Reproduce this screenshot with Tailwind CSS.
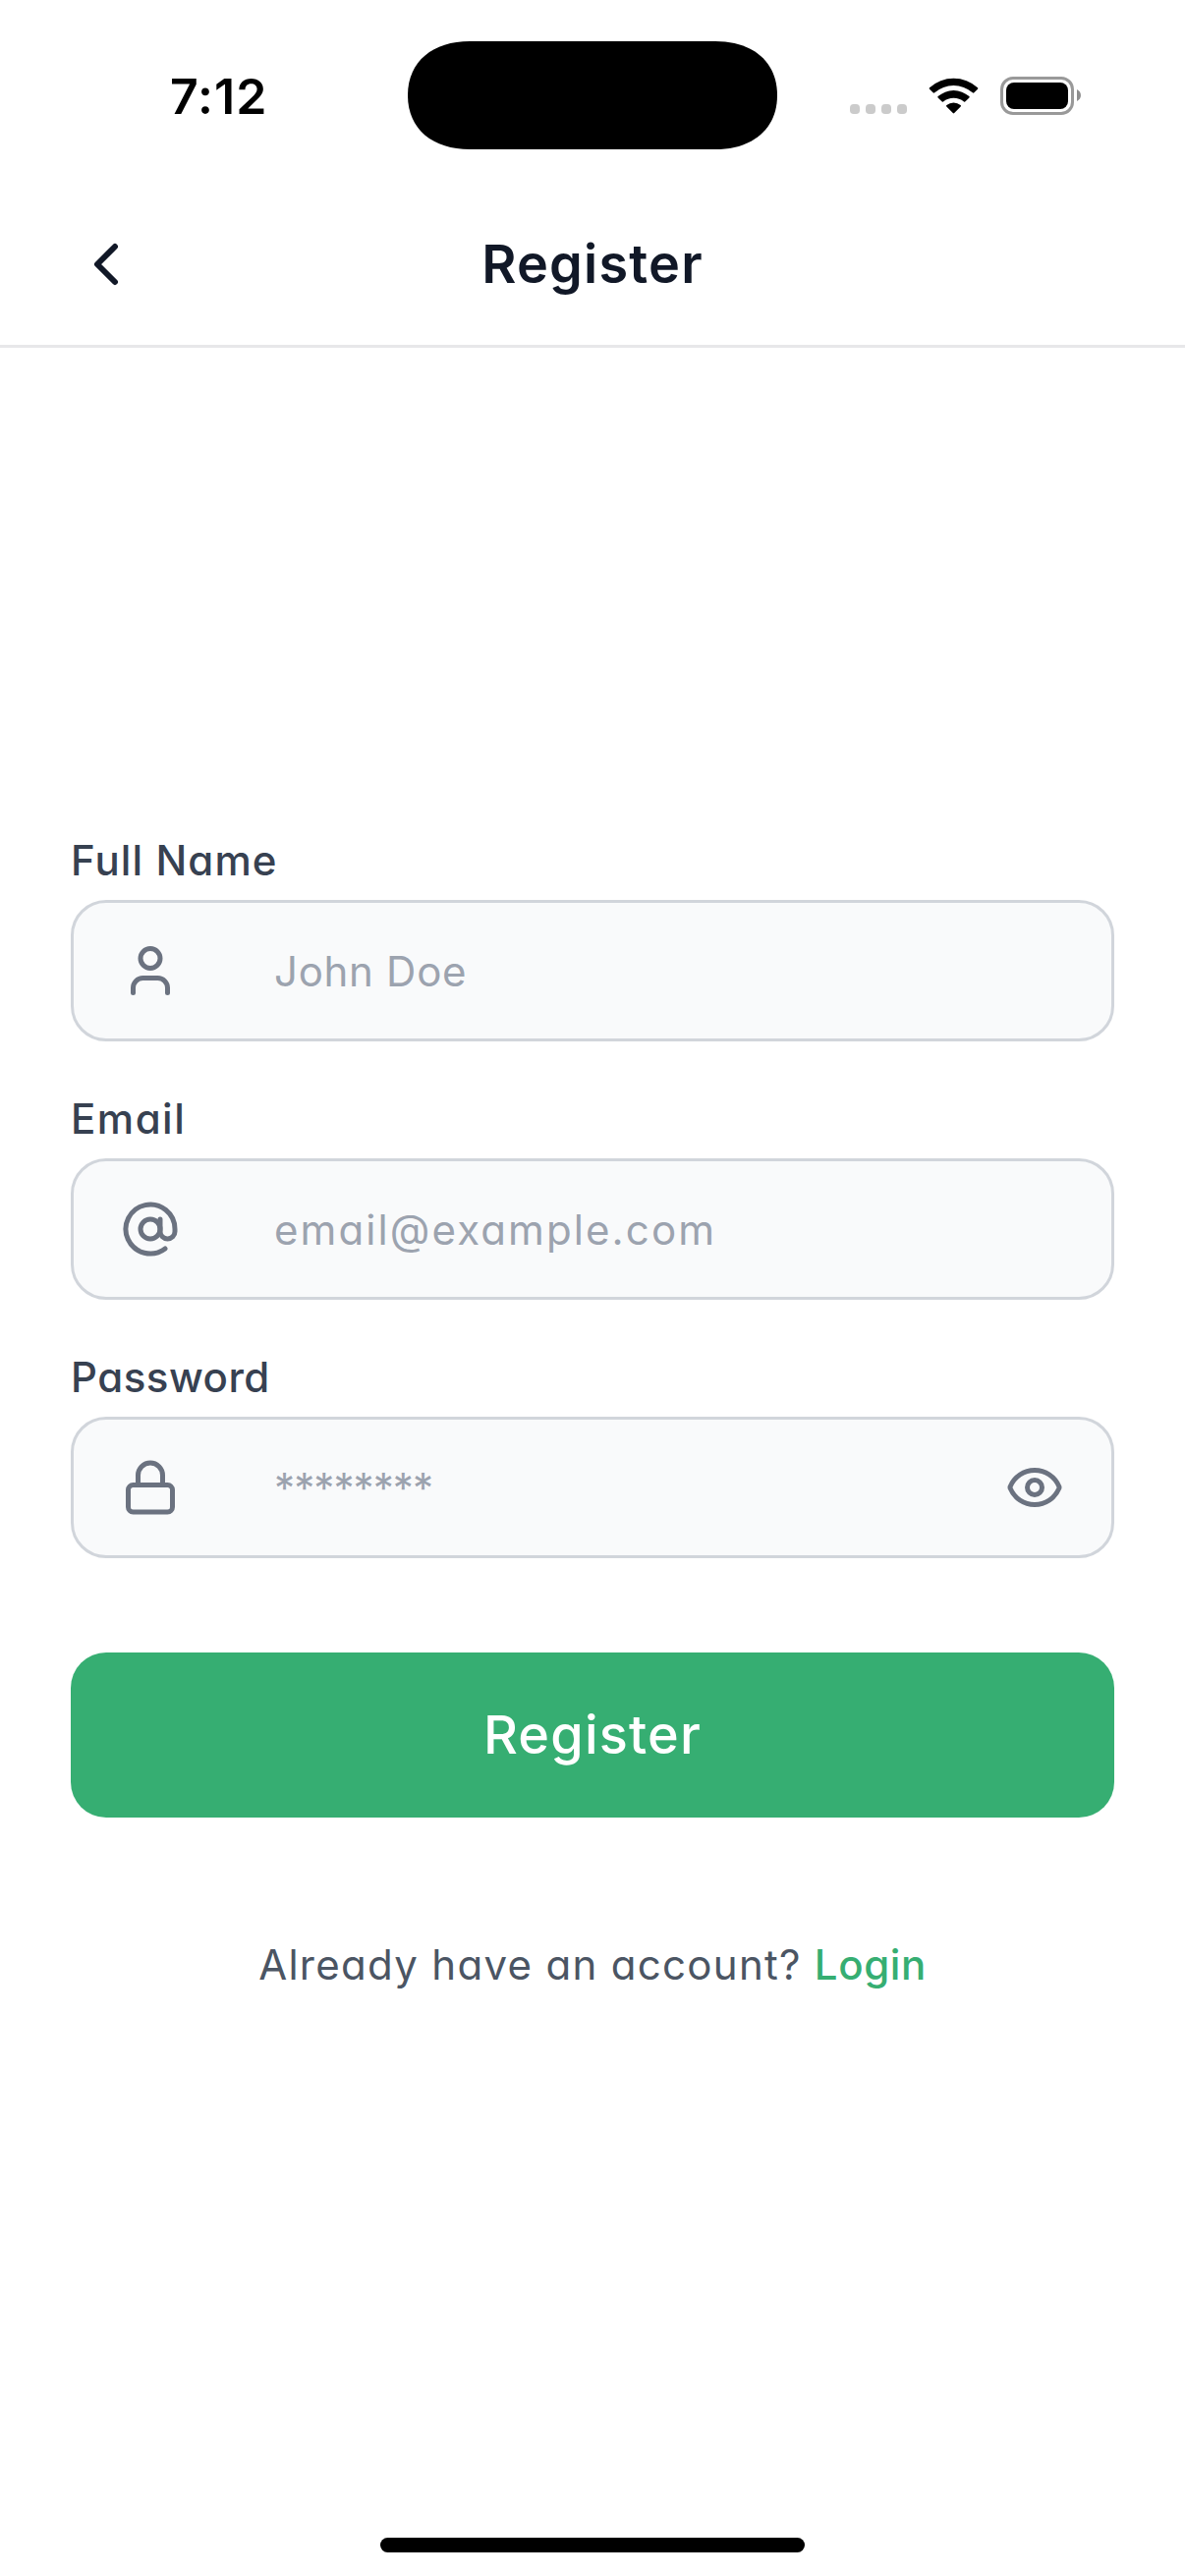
<!DOCTYPE html>
<html lang="en">
<head>
<meta charset="utf-8">
<title>Register</title>
<script src="https://cdn.jsdelivr.net/npm/@tailwindcss/browser@4"></script>
</head>
<body class="bg-white">
<div class="flex h-[2622px] w-[1206px] flex-col overflow-hidden bg-white font-['Inter','Open_Sans',sans-serif] [font-feature-settings:'cv11']">
  <!-- Status bar -->
  <div class="flex h-[186px] shrink-0 items-start pt-[42px]">
    <div class="flex h-[110px] w-[415px] items-center pl-[173px] pt-[2px]">
      <span class="text-[50px] font-semibold leading-none tracking-[1px] text-black">7:12</span>
    </div>
    <svg class="h-[110px] w-[376px]" viewBox="0 0 376 110"><path d="M63 0H313C350 0 376 20 376 55S350 110 313 110H63C26 110 0 90 0 55S26 0 63 0Z"/></svg>
    <svg class="h-[110px] w-[415px]" viewBox="791 42 415 110">
      <g fill="#cbcbcb">
        <rect x="865" y="106" width="10" height="10" rx="3.8"/><rect x="881" y="106" width="10" height="10" rx="3.8"/><rect x="897" y="106" width="10" height="10" rx="3.8"/><rect x="913" y="106" width="10" height="10" rx="3.8"/>
      </g>
      <path d="M946 89.300Q945.200 90 946 90.800L949.600 94.300Q950.400 95 951.200 94.300A29.500 29.500 0 0 1 989.800 94.300Q990.600 95 991.400 94.300L995 90.800Q995.800 90 995 89.300A36.500 36.500 0 0 0 946 89.300Z"/>
      <path d="M954.600 98.100Q953.900 98.800 954.600 99.500L958.500 103.300Q959.200 104 960 103.400A16.800 16.800 0 0 1 981 103.400Q981.800 104 982.500 103.300L986.400 99.500Q987.100 98.800 986.400 98.100A24 24 0 0 0 954.600 98.100Z"/>
      <path d="M963.400 107Q962.600 107.700 963.300 108.400L969.800 115.100Q970.500 115.800 971.200 115.100L977.700 108.400Q978.400 107.700 977.600 107A11.200 11.200 0 0 0 963.400 107Z"/>
      <rect x="1019.500" y="79.500" width="72" height="36" rx="11.500" fill="none" stroke="#999" stroke-width="3"/>
      <rect x="1024" y="84" width="63" height="27" rx="8"/>
      <path d="M1096 91C1101.300 93.500 1101.300 100.500 1096 103Z" fill="#8e8e8e"/>
    </svg>
  </div>

  <!-- Header -->
  <header class="grid h-[168px] shrink-0 grid-cols-3 items-center border-b-[3px] border-[#e7e7e9] px-[72px]">
    <svg class="h-[72px] w-[72px]" viewBox="0 0 72 72" fill="none" stroke="#111827" stroke-width="6" stroke-linecap="round" stroke-linejoin="round"><path d="M45 18L27 36L45 54"/></svg>
    <h1 class="text-center text-[54px] font-semibold leading-none tracking-[1.2px] text-[#111827]">Register</h1>
  </header>

  <!-- Form -->
  <main class="flex flex-col px-[72px] pt-[490px]">
    <form class="flex flex-col gap-[47px]">
      <div class="flex flex-col gap-[9px]">
        <label class="text-[42px] font-medium leading-[63px] tracking-[1.1px] text-[#374151]">Full Name</label>
        <div class="flex h-36 items-center rounded-[36px] border-3 border-[#d1d5db] bg-[#f9fafb] pl-12">
          <svg class="size-[60px]" viewBox="0 0 24 24" fill="none" stroke="#6b7280" stroke-width="2" stroke-linecap="round" stroke-linejoin="round"><circle cx="12" cy="7" r="4"/><path d="M5 21v-2a4 4 0 0 1 4-4h6a4 4 0 0 1 4 4v2"/></svg>
          <span class="ml-24 text-[42px] tracking-[0.7px] text-[#9ca3af]">John Doe</span>
        </div>
      </div>
      <div class="flex flex-col gap-[9px]">
        <label class="text-[42px] font-medium leading-[63px] tracking-[1.5px] text-[#374151]">Email</label>
        <div class="flex h-36 items-center rounded-[36px] border-3 border-[#d1d5db] bg-[#f9fafb] pl-12">
          <svg class="size-[60px]" viewBox="0 0 24 24" fill="none" stroke="#6b7280" stroke-width="2" stroke-linecap="round" stroke-linejoin="round"><circle cx="12" cy="12" r="4"/><path d="M16 8v5a3 3 0 0 0 6 0v-1a10 10 0 1 0-4 8"/></svg>
          <span class="ml-24 text-[42px] tracking-[2.1px] text-[#9ca3af]">email@example.com</span>
        </div>
      </div>
      <div class="flex flex-col gap-[9px]">
        <label class="text-[42px] font-medium leading-[63px] tracking-[0.5px] text-[#374151]">Password</label>
        <div class="flex h-36 items-center rounded-[36px] border-3 border-[#d1d5db] bg-[#f9fafb] px-12">
          <svg class="size-[60px]" viewBox="0 0 24 24" fill="none" stroke="#6b7280" stroke-width="2" stroke-linecap="round" stroke-linejoin="round"><rect x="3" y="11" width="18" height="11" rx="2"/><path d="M7 11V7a5 5 0 0 1 10 0v4"/></svg>
          <span class="ml-24 text-[42px] tracking-[-0.9px] text-[#9ca3af]">********</span>
          <svg class="ml-auto size-[60px]" viewBox="0 0 24 24" fill="none" stroke="#6b7280" stroke-width="2" stroke-linecap="round" stroke-linejoin="round"><path d="M2.062 12.348a1 1 0 0 1 0-.696 10.750 10.750 0 0 1 19.876 0 1 1 0 0 1 0 .696 10.750 10.750 0 0 1-19.876 0"/><circle cx="12" cy="12" r="3"/></svg>
        </div>
      </div>
    </form>
    <button class="mt-24 h-[168px] rounded-[36px] bg-[#36ae72] text-[54px] font-medium leading-none tracking-[1.2px] text-white">Register</button>
    <p class="mt-[118px] flex justify-center gap-[13px] text-[42px] leading-[63px] text-[#4b5563]"><span class="tracking-[1.3px]">Already have an account?</span><a class="font-medium tracking-[0.6px] text-[#36ae72]">Login</a></p>
  </main>

  <!-- Home indicator -->
  <div class="mx-auto mb-6 mt-auto h-[15px] w-[432px] shrink-0 rounded-full bg-black"></div>
</div>
</body>
</html>
